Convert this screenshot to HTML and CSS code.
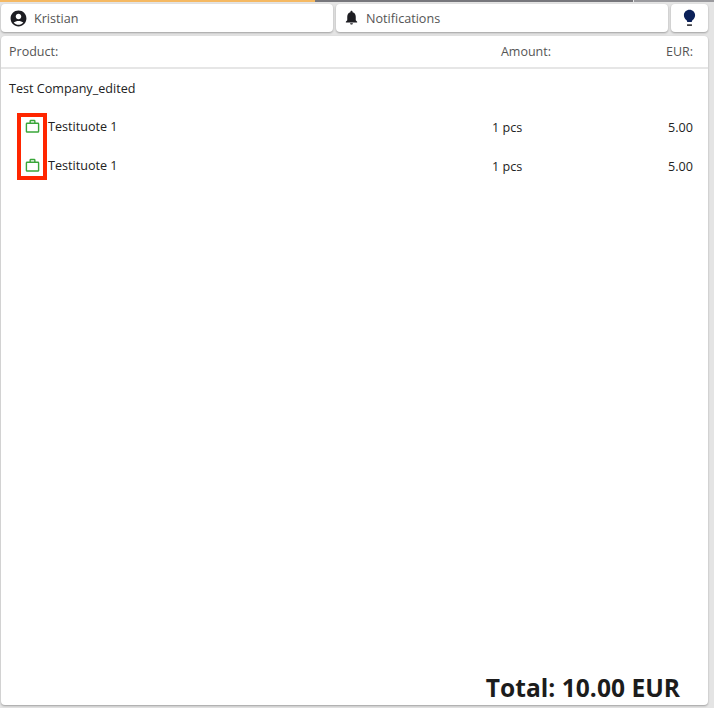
FILE: index.html
```html
<!DOCTYPE html>
<html>
<head>
    <title>Cart</title>
    <link rel="stylesheet" href="styles.css">
</head>
<body>
    <div class="progress">
        <div class="progress-done"></div>
        <div class="progress-rest"></div>
        <div class="progress-end"></div>
    </div>
    <div class="topbar">
        <div class="top-card grow">
            <svg class="icon user" width="19" height="19" viewBox="0 0 24 24"><path fill="#1d1d22" d="M12 2C6.48 2 2 6.48 2 12s4.48 10 10 10 10-4.48 10-10S17.52 2 12 2zm0 4c1.93 0 3.5 1.57 3.5 3.5S13.93 13 12 13s-3.5-1.57-3.5-3.5S10.07 6 12 6zm0 14c-2.03 0-4.43-.82-6.14-2.88C7.55 15.8 9.68 15 12 15s4.45.8 6.14 2.12C16.43 19.18 14.03 20 12 20z"/></svg>
            <span>Kristian</span>
        </div>
        <div class="top-card grow">
            <svg class="icon bell" width="17" height="17" viewBox="0 0 24 24"><path fill="#1d1d22" d="M12 22c1.1 0 2-.9 2-2h-4c0 1.1.9 2 2 2zm6-6v-5c0-3.07-1.63-5.64-4.5-6.32V4c0-.83-.67-1.500-1.500-1.500s-1.500.67-1.500 1.500v.68C7.640 5.360 6 7.920 6 11v5l-2 2v1h16v-1l-2-2z"/></svg>
            <span>Notifications</span>
        </div>
        <div class="top-card bulb">
            <svg width="21" height="21" viewBox="0 0 24 24"><path fill="#0b2159" d="M12 2c-3.600 0-6.400 2.800-6.400 6.200 0 2.500 1.300 4.200 2.800 5.600.7.600 1 1.400 1 2.200h5.200c0-.8.3-1.600 1-2.200 1.500-1.400 2.800-3.100 2.800-5.600C18.400 4.800 15.600 2 12 2z"/><rect x="9.200" y="18.700" width="5.600" height="1.700" fill="#1d1d22"/></svg>
        </div>
    </div>
    <div class="main-card">
        <div class="list-header">
            <span class="col-product">Product:</span>
            <span class="col-amount">Amount:</span>
            <span class="col-eur">EUR:</span>
        </div>
        <div class="company">Test Company_edited</div>
        <div class="rows">
            <div class="row">
                <svg class="bag" width="15" height="15" viewBox="0 0 16 16"><path fill="none" stroke="#3aa63a" stroke-width="1.500" d="M2.200 4.500h11.600c.4 0 .7.3.7.7v8c0 .4-.3.7-.7.7H2.200c-.4 0-.7-.3-.7-.7v-8c0-.4.3-.7.700-.7zM5.500 4.500V2.300c0-.4.3-.7.700-.7h3.600c.4 0 .7.3.7.7v2.200"/></svg>
                <span class="col-product">Testituote 1</span>
                <span class="col-amount">1 pcs</span>
                <span class="col-eur">5.00</span>
            </div>
            <div class="row">
                <svg class="bag" width="15" height="15" viewBox="0 0 16 16"><path fill="none" stroke="#3aa63a" stroke-width="1.500" d="M2.200 4.500h11.600c.4 0 .7.3.7.7v8c0 .4-.3.7-.7.7H2.200c-.4 0-.7-.3-.7-.7v-8c0-.4.3-.7.700-.7zM5.500 4.500V2.300c0-.4.3-.7.700-.7h3.600c.4 0 .7.3.7.7v2.200"/></svg>
                <span class="col-product">Testituote 1</span>
                <span class="col-amount">1 pcs</span>
                <span class="col-eur">5.00</span>
            </div>
            <div class="highlight"></div>
        </div>
        <div class="total">Total: 10.00 EUR</div>
    </div>
</body>
</html>
```

FILE: styles.css
```css
html, body {
    height: 100%;
}

body {
    margin: 0;
    padding: 0 6px 3px 1px;
    box-sizing: border-box;
    background-color: #e4e4e4;
    font-family: "Open Sans", sans-serif;
    color: #222;
    display: flex;
    flex-direction: column;
    overflow: hidden;
}

.progress {
    display: flex;
    height: 2px;
    margin: 0 -6px 2px -1px;
    flex-shrink: 0;
}

.progress-done {
    width: 315px;
    background-color: #f5b963;
}

.progress-rest {
    width: 318px;
    margin-right: 1px;
    background-color: #77777c;
}

.progress-end {
    flex: 1;
    background-color: #9a9a9e;
}

.topbar {
    display: flex;
    gap: 3px;
    height: 28px;
    flex-shrink: 0;
}

.top-card {
    background: white;
    border-radius: 4px;
    box-shadow: 0 1px 2px rgba(0, 0, 0, 0.3);
    display: flex;
    align-items: center;
    font-size: 12.6px;
    color: #555;
}

.top-card.grow {
    flex: 1;
    padding-left: 8px;
}

.top-card .icon {
    margin-right: 5px;
}

.top-card .user {
    margin-right: 6px;
}

.top-card .bell {
    margin-left: -1px;
    margin-top: -2px;
    margin-right: 6px;
}

.bulb {
    width: 37px;
    justify-content: center;
}

.main-card {
    flex: 1;
    margin-top: 4px;
    background: white;
    border-radius: 4px;
    box-shadow: 0 1px 2px rgba(0, 0, 0, 0.3);
    display: flex;
    flex-direction: column;
}

.list-header {
    display: flex;
    align-items: center;
    height: 31px;
    padding: 0 15px 0 8px;
    border-bottom: 2px solid #e6e6e6;
    font-size: 12.5px;
    color: #555;
}

.list-header .col-product {
    flex: 1;
}

.list-header .col-amount {
    width: 50px;
    margin-right: 115px;
    white-space: nowrap;
}

.list-header .col-eur {
    text-align: right;
}

.company {
    margin: 11px 0 0 8px;
    height: 18px;
    line-height: 18px;
    font-size: 12.6px;
}

.rows {
    position: relative;
    margin-top: 10px;
    flex: 1;
}

.row {
    display: flex;
    align-items: center;
    height: 39px;
    padding: 0 15px 0 24px;
    font-size: 12.6px;
}

.bag {
    margin-right: 8px;
    position: relative;
    top: -1px;
}

.row .col-product {
    flex: 1;
    position: relative;
    top: -1px;
}

.row .col-amount {
    width: 30px;
    margin-right: 131px;
    white-space: nowrap;
}

.row .col-eur {
    width: 40px;
    text-align: right;
}

.highlight {
    position: absolute;
    left: 16px;
    top: 5px;
    width: 22px;
    height: 59px;
    border: 4px solid #ff2600;
}

.total {
    text-align: right;
    padding: 0 28px 2px 0;
    font-size: 24.6px;
    font-weight: 700;
    line-height: 30px;
    color: #1c1c1c;
}
```
